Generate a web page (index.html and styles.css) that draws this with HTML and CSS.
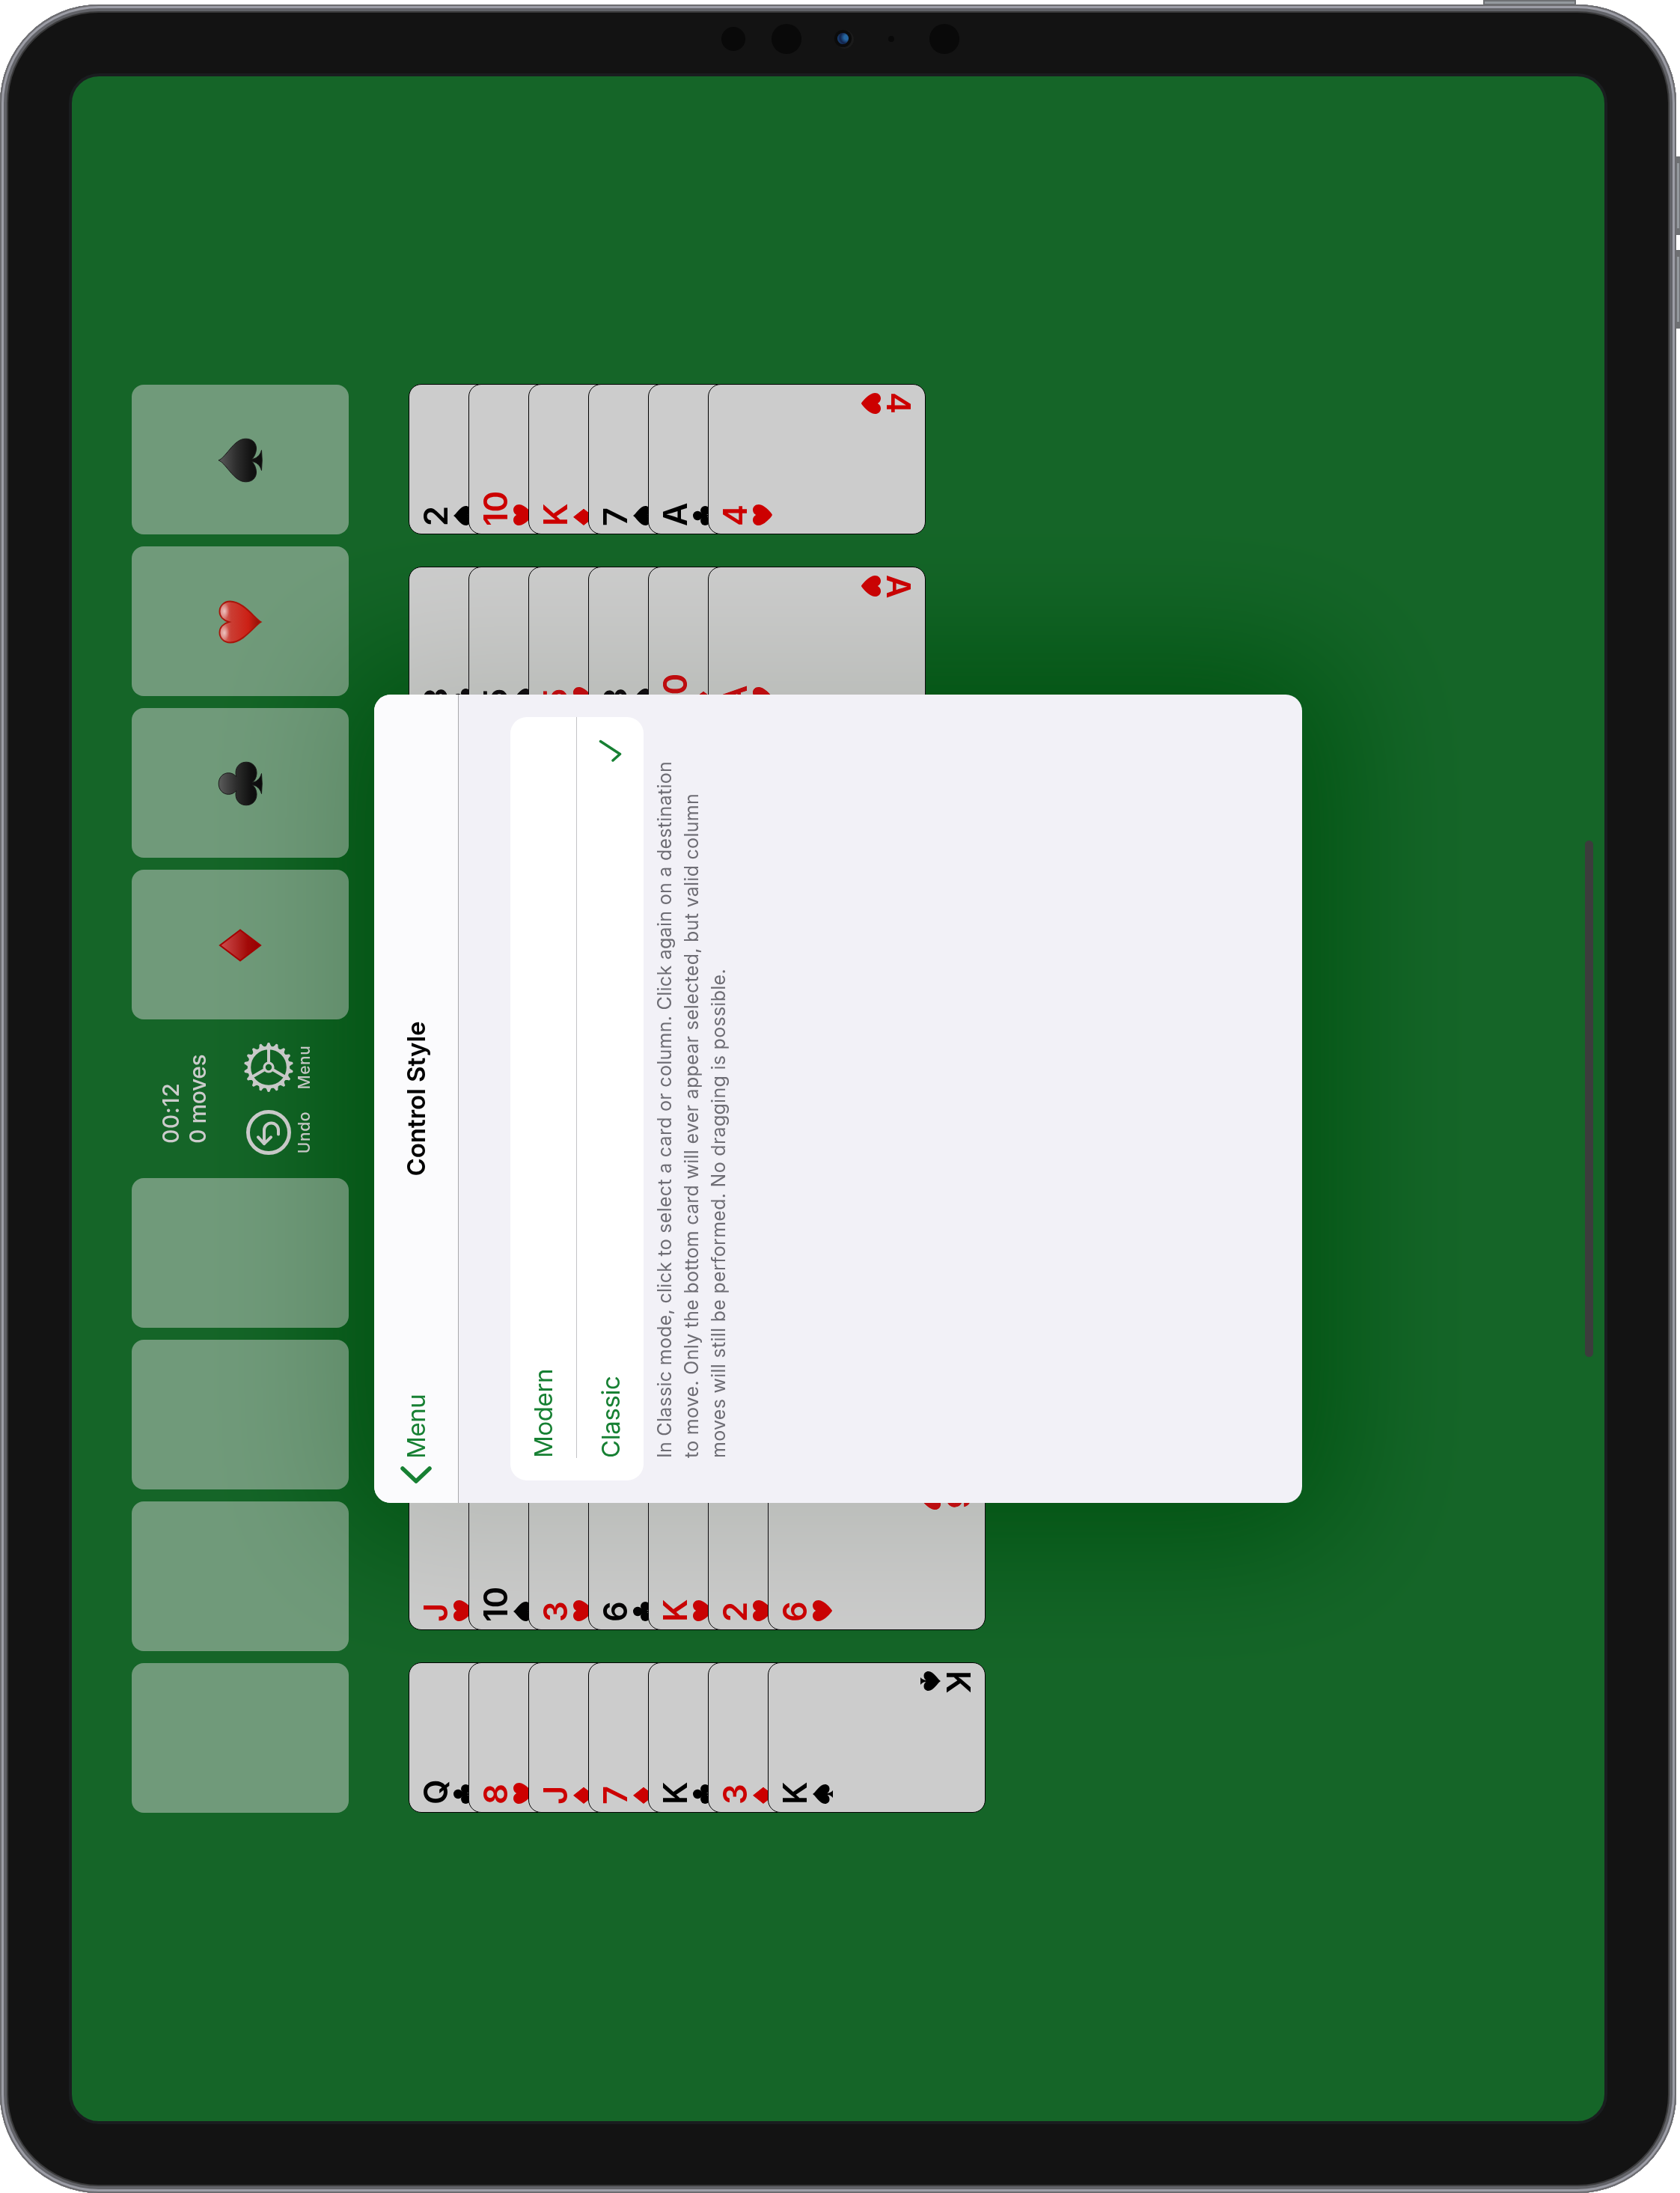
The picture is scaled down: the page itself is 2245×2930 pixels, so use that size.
FILE: index.html
```html
<!DOCTYPE html>
<html lang="en">
<head>
<meta charset="utf-8">
<title>FreeCell – Control Style</title>
<link rel="stylesheet" href="styles.css">
</head>
<body>
<svg class="defs" aria-hidden="true">
  <defs>
    <linearGradient id="ink" x1="0" y1="0" x2="0" y2="1"><stop offset="0" stop-color="#5c5c5c"/><stop offset=".4" stop-color="#2e2e2e"/><stop offset=".75" stop-color="#121212"/><stop offset="1" stop-color="#0c0c0c"/></linearGradient>
    <linearGradient id="ruby" x1="0" y1="0" x2="0" y2="1"><stop offset="0" stop-color="#cf5050"/><stop offset=".7" stop-color="#a30a08"/><stop offset="1" stop-color="#960000"/></linearGradient>
    <linearGradient id="rose" x1="0" y1="0" x2="0" y2="1"><stop offset="0" stop-color="#d98a84"/><stop offset=".28" stop-color="#ca3d33"/><stop offset=".7" stop-color="#cc2015"/><stop offset="1" stop-color="#8a0f05"/></linearGradient>
    <radialGradient id="shine"><stop offset="0" stop-color="#fff" stop-opacity=".6"/><stop offset="1" stop-color="#fff" stop-opacity="0"/></radialGradient>
    <symbol id="h" viewBox="0 0 28 28"><path d="M14 26C12.6 26 0 15.5 0 7.8C0 3 3.3 0 7.3 0C10.2 0 12.8 1.6 14 4.2C15.2 1.6 17.8 0 20.7 0C24.7 0 28 3 28 7.8C28 15.5 15.4 26 14 26Z"/></symbol>
    <symbol id="s" viewBox="0 0 28 28"><path d="M13 0C11.6 3 0 9.5 0 16.3C0 20 2.5 22.5 6 22.5C8.5 22.5 10.6 21.3 11.9 19.4C11.7 22.5 10.5 24.8 8 27H18C15.5 24.8 14.3 22.5 14.1 19.4C15.4 21.3 17.5 22.5 20 22.5C23.5 22.5 26 20 26 16.3C26 9.5 14.4 3 13 0Z"/></symbol>
    <symbol id="c" viewBox="0 0 28 28"><circle cx="13" cy="6.2" r="6.2"/><circle cx="6.2" cy="16.3" r="6.2"/><circle cx="19.8" cy="16.3" r="6.2"/><path d="M10 10H16L15.5 15L14.1 18.5C14.3 22.5 15.5 24.8 18 27H8C10.5 24.8 11.7 22.5 11.9 18.5L9 13Z"/></symbol>
    <symbol id="d" viewBox="0 0 28 28"><path d="M11.2 .6L21.8 14L11.2 27.4L.6 14Z" stroke="currentColor" stroke-width="1" stroke-linejoin="round"/></symbol>
  </defs>
</svg>

<div class="frame">
<div class="stage">
  <i class="key key-power"></i><i class="key key-up"></i><i class="key key-down"></i>
  <div class="device">
    <div class="sensors">
      <i class="dot dot-m"></i><i class="dot dot-l"></i><i class="lens"></i><i class="dot dot-s"></i><i class="dot dot-l"></i>
    </div>
    <main class="screen">
      <section class="top-row">
        <div class="cells"><div class="slot"></div><div class="slot"></div><div class="slot"></div><div class="slot"></div></div>
        <div class="status">
          <p class="stats"><span class="clock">00:12</span><br>0 moves</p>
          <div class="tools">
            <button class="tool">
              <svg class="tool-icon" viewBox="-33 -33 66 66"><g transform="rotate(90)" fill="none" stroke="currentColor" stroke-linecap="round" stroke-linejoin="round"><circle r="27.5" stroke-width="5"/><path stroke-width="4" d="M-6 15.2V-3A9.5 9.5 0 0 1 13 -3V2.5M-14 6.3L-6 15.2L3 6.3"/></g></svg>
              <span class="tool-label">Undo</span>
            </button>
            <button class="tool">
              <svg class="tool-icon" viewBox="-33 -33 66 66"><g fill="none" stroke="currentColor"><circle r="26" stroke-width="4.4"/><circle r="5.9" stroke-width="3.4"/><path stroke-width="4" d="M7 0H25M-3.5 6.1L-12.5 21.6M-3.5 -6.1L-12.5 -21.6"/></g>
                <g fill="currentColor">
                  <g id="teeth"><path id="tooth" d="M26.5 -4.2C29 -3.2 30 -2 32 -1.7Q33 -1.5 33 0Q33 1.5 32 1.7C30 2 29 3.2 26.5 4.2Z"/><use href="#tooth" transform="rotate(20)"/><use href="#tooth" transform="rotate(40)"/><use href="#tooth" transform="rotate(60)"/><use href="#tooth" transform="rotate(80)"/><use href="#tooth" transform="rotate(100)"/></g>
                  <use href="#teeth" transform="rotate(120)"/><use href="#teeth" transform="rotate(240)"/>
                </g></svg>
              <span class="tool-label">Menu</span>
            </button>
          </div>
        </div>
        <div class="cells">
          <div class="slot"><svg class="emblem" viewBox="0 0 60 60"><path fill="url(#ruby)" stroke="#a50000" stroke-width="2" d="M30 3L50.5 30L30 57L9.5 30Z"/></svg></div>
          <div class="slot"><svg class="emblem" viewBox="0 0 60 60"><path fill="url(#ink)" stroke="#1b1b1b" stroke-width="1" d="M30 1.2C38.5 1.2 44.3 7 44.3 14.5C44.3 18.5 42.5 22 39.500 24.800C41 24.200 42.800 24 44.500 24C52.500 24 58.800 29.600 58.800 38C58.800 46.500 52.500 52 44.500 52C39 52 33.500 49.500 31.700 46C32 51 36 56.500 43.500 58.500Q30 60 16.500 58.500C24 56.500 28 51 28.300 46C26.500 49.500 21 52 15.500 52C7.500 52 1.200 46.500 1.200 38C1.200 29.600 7.500 24 15.500 24C17.200 24 19 24.200 20.500 24.800C17.500 22 15.700 18.500 15.700 14.500C15.700 7 21.500 1.200 30 1.200Z"/></svg></div>
          <div class="slot"><svg class="emblem" viewBox="0 0 60 60"><path fill="url(#rose)" stroke="#a8140a" stroke-width="2" d="M30 57.500C25 49 2.500 34 2.500 16.500C2.500 8 9 2.500 16 2.500C23 2.500 28 8 30 15C32 8 37 2.500 44 2.500C51 2.500 57.500 8 57.500 16.500C57.500 34 35 49 30 57.500Z"/><ellipse cx="15.500" cy="9" rx="11" ry="6.500" fill="url(#shine)"/><ellipse cx="44.500" cy="9" rx="11" ry="6.500" fill="url(#shine)"/></svg></div>
          <div class="slot"><svg class="emblem" viewBox="0 0 60 60"><path fill="url(#ink)" stroke="#1b1b1b" stroke-width="1" d="M30 1C32 6 36.500 9 44 15.500C54 23.500 58.800 30 58.800 37.500C58.800 46 53.500 51.500 46 51.500C40 51.500 34 48.500 31.700 45.500C32 51 36 56.500 43.500 58.500Q30 60 16.500 58.500C24 56.500 28 51 28.300 45.500C26 48.500 20 51.500 14 51.500C6.500 51.500 1.200 46 1.200 37.500C1.200 30 6 23.500 16 15.500C23.500 9 28 6 30 1Z"/></svg></div>
        </div>
      </section>

      <section class="tableau">
        <div class="column">
          <div class="card"><span class="corner">Q<svg><use href="#c"/></svg></span></div>
          <div class="card red"><span class="corner">8<svg><use href="#h"/></svg></span></div>
          <div class="card red"><span class="corner">J<svg><use href="#d"/></svg></span></div>
          <div class="card red"><span class="corner">7<svg><use href="#d"/></svg></span></div>
          <div class="card"><span class="corner">K<svg><use href="#c"/></svg></span></div>
          <div class="card red"><span class="corner">3<svg><use href="#d"/></svg></span></div>
          <div class="card"><span class="corner">K<svg><use href="#s"/></svg></span><span class="corner flip">K<svg><use href="#s"/></svg></span></div>
        </div>
        <div class="column">
          <div class="card red"><span class="corner">J<svg><use href="#h"/></svg></span></div>
          <div class="card"><span class="corner">10<svg><use href="#s"/></svg></span></div>
          <div class="card red"><span class="corner">3<svg><use href="#h"/></svg></span></div>
          <div class="card"><span class="corner">6<svg><use href="#c"/></svg></span></div>
          <div class="card red"><span class="corner">K<svg><use href="#h"/></svg></span></div>
          <div class="card red"><span class="corner">2<svg><use href="#h"/></svg></span></div>
          <div class="card red"><span class="corner">6<svg><use href="#h"/></svg></span><span class="corner flip">6<svg><use href="#h"/></svg></span></div>
        </div>
        <div class="column"></div>
        <div class="column"></div>
        <div class="column"></div>
        <div class="column"></div>
        <div class="column">
          <div class="card"><span class="corner">8<svg><use href="#c"/></svg></span></div>
          <div class="card"><span class="corner">5<svg><use href="#s"/></svg></span></div>
          <div class="card red"><span class="corner">5<svg><use href="#h"/></svg></span></div>
          <div class="card"><span class="corner">8<svg><use href="#s"/></svg></span></div>
          <div class="card red"><span class="corner">10<svg><use href="#d"/></svg></span></div>
          <div class="card red"><span class="corner">A<svg><use href="#h"/></svg></span><span class="corner flip">A<svg><use href="#h"/></svg></span></div>
        </div>
        <div class="column">
          <div class="card"><span class="corner">2<svg><use href="#s"/></svg></span></div>
          <div class="card red"><span class="corner">10<svg><use href="#h"/></svg></span></div>
          <div class="card red"><span class="corner">K<svg><use href="#d"/></svg></span></div>
          <div class="card"><span class="corner">7<svg><use href="#s"/></svg></span></div>
          <div class="card"><span class="corner">A<svg><use href="#c"/></svg></span></div>
          <div class="card red"><span class="corner">4<svg><use href="#h"/></svg></span><span class="corner flip">4<svg><use href="#h"/></svg></span></div>
        </div>
      </section>

      <div class="dialog-shadow"></div>
      <div class="dialog" role="dialog">
        <header class="navbar">
          <a class="back"><svg class="chevron" viewBox="0 0 24 42"><path d="M21 3L4 21L21 39" fill="none" stroke="currentColor" stroke-width="5.5" stroke-linecap="round" stroke-linejoin="round"/></svg><span class="back-text">Menu</span></a>
          <h1 class="title">Control Style</h1>
        </header>
        <div class="options">
          <div class="option">Modern</div>
          <div class="option">Classic<svg class="check" viewBox="0 0 30 32"><path d="M2 19L10.5 28.5L27.5 2.5" fill="none" stroke="currentColor" stroke-width="3.5" stroke-linecap="round" stroke-linejoin="round"/></svg></div>
        </div>
        <p class="note">In Classic mode, click to select a card or column. Click again on a destination<br>to move. Only the bottom card will ever appear selected, but valid column<br>moves will still be performed. No dragging is possible.</p>
      </div>
      <i class="home-bar"></i>
    </main>
  </div>
</div>
</div>
</body>
</html>
```
FILE: styles.css
```css
* { box-sizing: border-box; }
html, body { margin: 0; background: #fff; }
body { font-family: Inter, "Liberation Sans", sans-serif; }
.defs { position: absolute; width: 0; height: 0; }

.frame {
  width: 2245px;
  height: 2930px;
  overflow: hidden;
  contain: paint;
}
/* The tablet is laid out in landscape and turned a quarter counter-clockwise */
.stage {
  position: relative;
  width: 2930px;
  height: 2245px;
  transform-origin: 0 0;
  transform: translateY(2930px) rotate(-90deg);
}
.device {
  position: relative;
  width: 2924px;
  height: 2240px;
  padding: 92px;
  border-radius: 132px;
  background: #131313;
  box-shadow:
    inset 0 0 0 2px #6c6c70,
    inset 0 0 0 5px #9c9da6,
    inset 0 0 0 9px #626368,
    inset 0 0 0 11px #3a3a3b;
}
.key { position: absolute; background: #94999e; border: 2px solid #6e7073; }
.key-power { left: 2923px; top: 1982px; width: 7px; height: 124px; }
.key-up { left: 2616px; top: 2239px; width: 105px; height: 6px; border-width: 2px 9px 1px; }
.key-down { left: 2491px; top: 2239px; width: 105px; height: 6px; border-width: 2px 9px 1px; }

.sensors {
  position: absolute;
  right: 26px;
  top: 964px;
  width: 40px;
  display: flex;
  flex-direction: column;
  align-items: center;
}
.dot { border-radius: 50%; background: #090909; }
.dot-m { width: 32px; height: 32px; margin-bottom: 35px; }
.dot-l { width: 40px; height: 40px; }
.dot-s { width: 8px; height: 8px; margin: 53px 0 47px; }
.lens {
  width: 15px;
  height: 15px;
  margin-top: 48px;
  border-radius: 50%;
  background: radial-gradient(circle at 60% 80%, #2565a0 0 20%, #12224a 55%, #1d4f86 90%);
  box-shadow: 0 0 0 4px #0b0b0b, -1px 2px 0 5px #1b1b1b;
}

.screen {
  position: relative;
  width: 2740px;
  height: 2056px;
  padding: 80px 412px 0;
  border: 4px solid #1a1d1f;
  border-radius: 40px;
  background: #156528;
  overflow: hidden;
  isolation: isolate;
}

/* free cells, status and foundations */
.top-row { display: flex; height: 290px; }
.cells { display: flex; gap: 16px; }
.slot {
  display: flex;
  align-items: center;
  justify-content: center;
  width: 200px;
  height: 290px;
  border-radius: 16px;
  background: rgba(212, 212, 212, .475);
}
.emblem { width: 60px; height: 60px; margin-right: 2px; }
.status { width: 212px; padding: 34px 0 0 28px; color: #ccc; }
.stats {
  margin: 0 0 44px;
  padding-left: 18px;
  font-size: 30px;
  font-weight: 550;
  line-height: 36px;
  letter-spacing: -.4px;
  white-space: nowrap;
}
.clock { letter-spacing: .5px; }
.tools { display: flex; gap: 21px; }
.tool {
  display: flex;
  flex-direction: column;
  align-items: center;
  gap: 2px;
  width: 66px;
  padding: 0;
  border: 0;
  background: none;
  color: inherit;
  font: 520 21px/26px Inter, "Liberation Sans", sans-serif;
  letter-spacing: .6px;
}
.tool-icon { width: 66px; height: 66px; }

/* tableau */
.tableau { display: flex; gap: 43px; margin-top: 80px; }
.column { flex: none; width: 201px; }
.card {
  position: relative;
  width: 201px;
  height: 291px;
  border: 1px solid #000;
  border-radius: 17px;
  background: #ccc;
  color: #000;
}
.card + .card { margin-top: -211px; }
.card.red { color: #c00; }
.corner {
  display: flex;
  flex-direction: column;
  gap: 2px;
  padding: 13px 0 0 10px;
  font-size: 43.5px;
  font-weight: 570;
  line-height: 44px;
}
.corner svg { display: block; width: 28px; height: 28px; margin-left: 1px; fill: currentColor; }
.flip { position: absolute; inset: 0; transform: rotate(180deg); }

/* dialog */
.dialog-shadow, .dialog {
  position: absolute;
  left: 826px;
  top: 404px;
  width: 1080px;
  height: 1240px;
  border-radius: 22px;
}
.dialog-shadow {
  box-shadow: 0 0 190px 54px rgb(23, 20, 24);
  mix-blend-mode: difference;
}
.dialog { background: #f2f1f7; overflow: hidden; color: #178033; }
.navbar {
  display: grid;
  grid-template-columns: 1fr auto 1fr;
  height: 113px;
  border-bottom: 1px solid #a9a9ac;
  background: #fbfbfd;
  font-size: 33px;
  line-height: 112px;
}
.back { display: flex; align-items: center; padding-left: 25px; letter-spacing: -.4px; }
.chevron { width: 24px; height: 42px; margin-right: 10px; }
.title { margin: 0; color: #000; font-size: 33px; font-weight: 600; letter-spacing: 0; }
.options {
  margin: 69px 30px 0;
  height: 178px;
  border-radius: 22px;
  background: #fff;
  font-size: 33px;
  letter-spacing: -.4px;
}
.option {
  display: flex;
  align-items: center;
  justify-content: space-between;
  height: 88px;
  margin-left: 30px;
  padding-right: 30px;
}
.option + .option { height: 90px; border-top: 1px solid #c4c4c6; }
.check { width: 30px; height: 32px; }
.note {
  margin: 10px 0 0 60px;
  color: #6e6d74;
  font-size: 25px;
  line-height: 36px;
  letter-spacing: .28px;
  white-space: nowrap;
}

.home-bar {
  position: absolute;
  left: 1021px;
  top: 2022px;
  width: 690px;
  height: 11px;
  border-radius: 6px;
  background: #3c3c3c;
}
```
